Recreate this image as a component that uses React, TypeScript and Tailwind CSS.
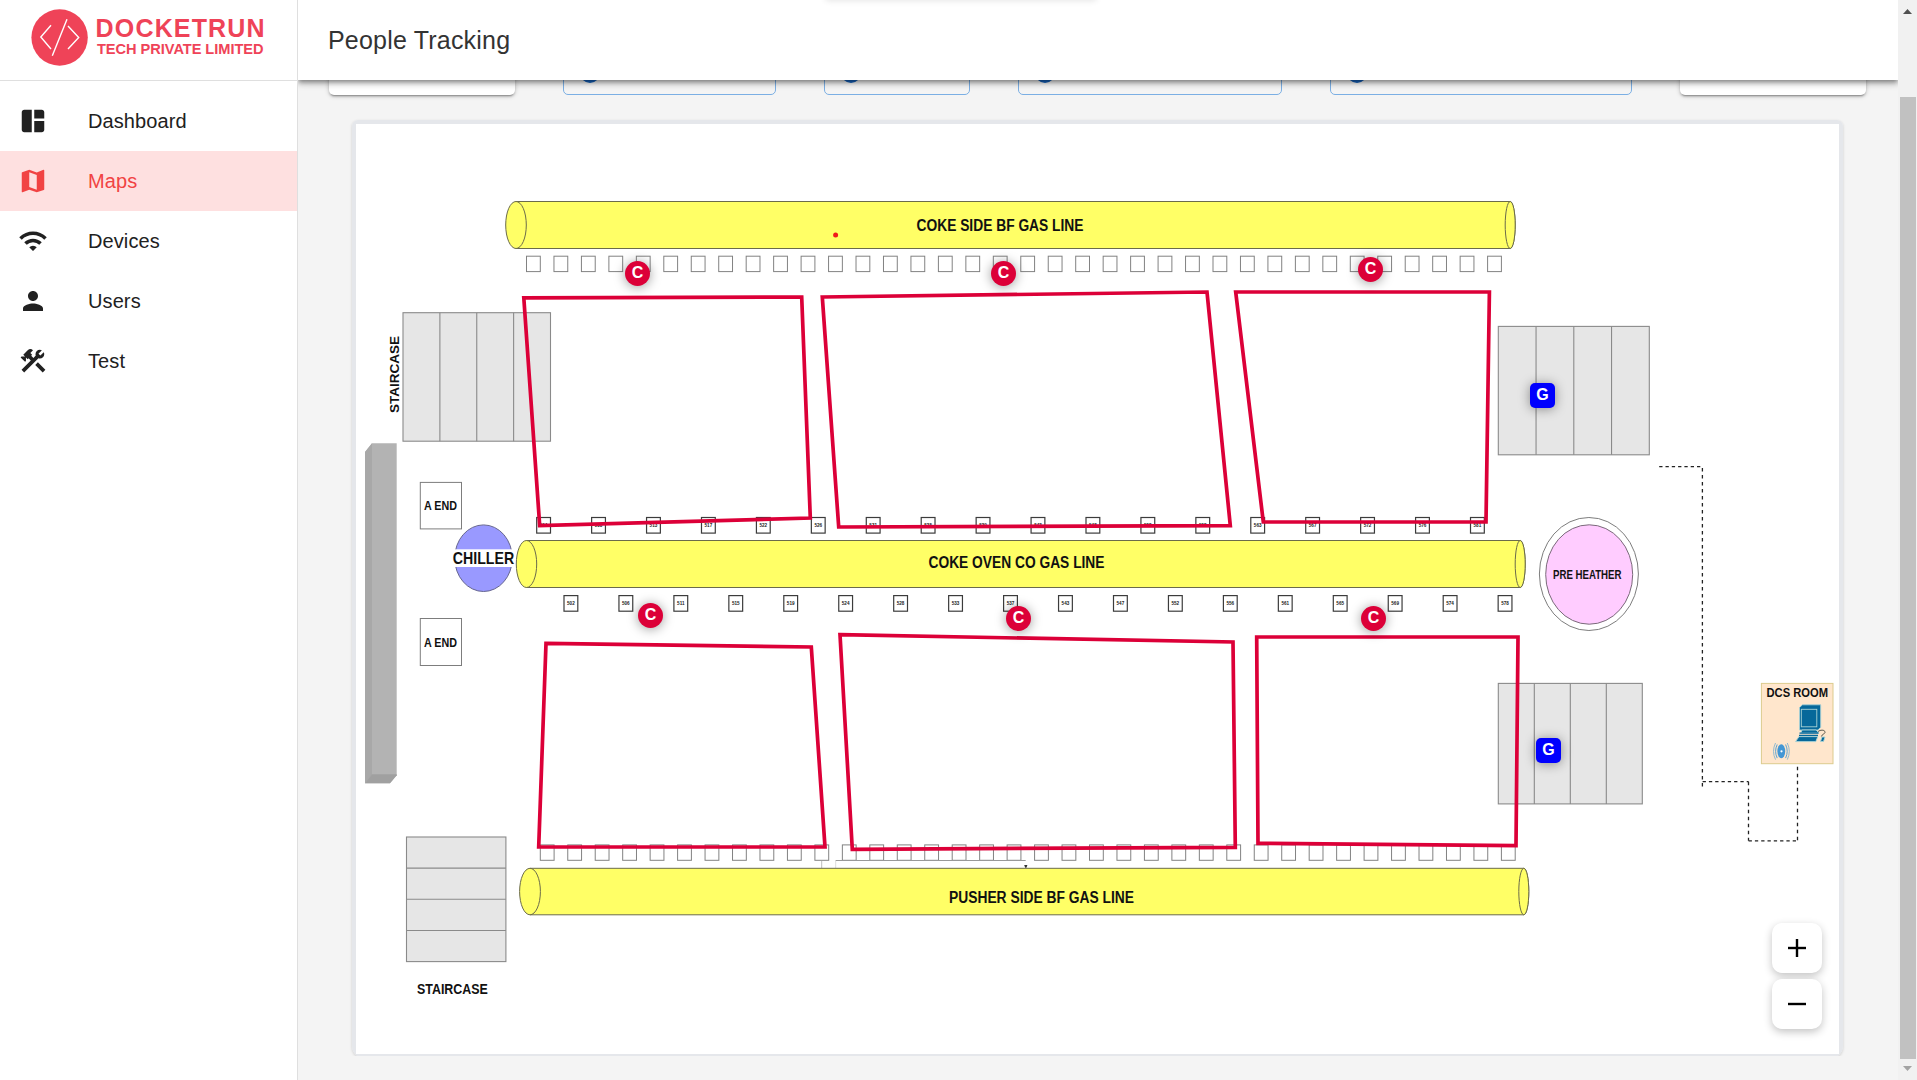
import React from "react";
import { MdSpaceDashboard, MdMap, MdWifi, MdPerson, MdConstruction } from "react-icons/md";

const NAV = [
  { label: "Dashboard", Icon: MdSpaceDashboard },
  { label: "Maps", Icon: MdMap, active: true },
  { label: "Devices", Icon: MdWifi },
  { label: "Users", Icon: MdPerson },
  { label: "Test", Icon: MdConstruction },
];

function Logo() {
  return (
    <svg width="240" height="66" viewBox="28 4 240 66" className="mt-1 ml-7" fill="none">
      <circle cx="59.6" cy="37.5" r="28.2" fill="#ef4358" />
      <g stroke="#fff" strokeWidth="1.4">
        <path d="M51 25.3 40.8 37 51 49" />
        <path d="M68 26 78.7 37.4 68 49" />
        <path d="M67 19.3 52.3 55.7" />
      </g>
      <g fill="#ef4358" className="font-['Liberation_Sans',sans-serif] font-bold">
        <text x="95.6" y="37.4" fontSize="25" textLength="169" lengthAdjust="spacing">DOCKETRUN</text>
        <text x="97" y="54" fontSize="14.6" textLength="166.5" lengthAdjust="spacing">TECH PRIVATE LIMITED</text>
      </g>
    </svg>
  );
}

function Sidebar() {
  return (
    <aside className="flex h-full w-[298px] shrink-0 flex-col border-r border-[#dfdfdf] bg-white">
      <div className="h-[81px] border-b border-[#dfdfdf]">
        <Logo />
      </div>
      <nav className="flex flex-col pt-2.5">
        {NAV.map(({ label, Icon, active }) => (
          <a
            key={label}
            className={
              active
                ? "flex h-[60px] items-center bg-[#fee0e0] pl-[18px] text-xl tracking-[0.1px] text-[#f14343]"
                : "flex h-[60px] items-center pl-[18px] text-xl tracking-[0.1px] text-[#212121]"
            }
          >
            <Icon size={30} className="mr-10 shrink-0" />
            <span>{label}</span>
          </a>
        ))}
      </nav>
    </aside>
  );
}

function Chip({ className }: { className: string }) {
  return (
    <div className={`h-10 rounded-[5px] border border-[#7bafe4] pt-[7px] pl-4 ${className}`}>
      <div className="size-5 rounded-full bg-[#1565c0]" />
    </div>
  );
}

function Toolbar() {
  const field =
    "h-10 w-[186px] rounded-[5px] bg-white shadow-[0_3px_1px_-2px_rgba(0,0,0,0.2),0_2px_2px_0_rgba(0,0,0,0.14),0_1px_5px_0_rgba(0,0,0,0.2)]";
  return (
    <div className="-mt-[25px] flex h-10 shrink-0 pl-[31px]">
      <div className={field} />
      <Chip className="ml-12 w-[213px]" />
      <Chip className="ml-12 w-[146px]" />
      <Chip className="ml-12 w-[264px]" />
      <Chip className="ml-12 w-[302px]" />
      <div className={`ml-12 ${field}`} />
    </div>
  );
}

/* ---------- Plant drawing ---------- */

const range = (n: number) => Array.from({ length: n }, (_, i) => i);

function Pipe({ x1, r1, x2, top, bottom }: { x1: number; r1: number; x2: number; top: number; bottom: number }) {
  const cy = (top + bottom) / 2;
  const ry = (bottom - top) / 2;
  return (
    <g fill="#ffff66" stroke="#6b6b4a" strokeWidth="1">
      <path d={`M${x1} ${top}H${x2}A5 ${ry} 0 0 1 ${x2} ${bottom}H${x1}Z`} />
      <ellipse cx={x1} cy={cy} rx={r1} ry={ry} />
      <ellipse cx={x2} cy={cy} rx={5} ry={ry} />
    </g>
  );
}

function Stairs({ x, y, w, h, horizontal }: { x: number; y: number; w: number; h: number; horizontal?: boolean }) {
  return (
    <g stroke="#8a8a8a" strokeWidth="1.1">
      <rect x={x} y={y} width={w} height={h} fill="#e6e6e6" />
      {[1, 2, 3].map((i) =>
        horizontal ? (
          <path key={i} d={`M${x} ${y + (h * i) / 4}h${w}`} />
        ) : (
          <path key={i} d={`M${x + (w * i) / 4} ${y}v${h}`} />
        ),
      )}
    </g>
  );
}

function Label({ x1, x2, y, size, children }: { x1: number; x2: number; y: number; size: number; children: string }) {
  return (
    <text x={x1} y={y} fontSize={size} textLength={x2 - x1} lengthAdjust="spacingAndGlyphs" fill="#111">
      {children}
    </text>
  );
}

const UPPER = ["504", "508", "513", "517", "522", "526", "531", "535", "539", "543", "548", "553", "558", "563", "567", "572", "576", "581"];
const LOWER = ["502", "506", "511", "515", "519", "524", "528", "533", "537", "543", "547", "552", "556", "561", "565", "569", "574", "578"];

function OvenRow({ x, y, pitch, names }: { x: number; y: number; pitch: number; names: string[] }) {
  return (
    <g>
      {names.map((n, i) => (
        <g key={n}>
          <rect x={x + i * pitch} y={y} width="13.8" height="15.6" fill="#fff" stroke="#3c3c3c" strokeWidth="1.2" />
          <text x={x + i * pitch + 6.9} y={y + 9.4} fontSize="4.6" textAnchor="middle" fill="#222" className="font-bold">
            {n}
          </text>
        </g>
      ))}
    </g>
  );
}

function BoxRow({ x, y }: { x: number; y: number }) {
  return (
    <g fill="none" stroke="#828282" strokeWidth="1">
      {range(36).map((i) => (
        <rect key={i} x={x + i * 27.46} y={y} width="13.8" height="15.4" />
      ))}
    </g>
  );
}

const ZONES = [
  "523.8,297.8 801.7,297 810.3,518 539.7,525.7",
  "822.3,297 1207,292 1230.3,525.7 838.7,527",
  "1235.7,292 1489.4,292 1486,522 1263.3,522",
  "546,643.3 811.3,647 825,847 538.7,847",
  "840,634.7 1233,642 1235.3,847.3 852.3,849.3",
  "1256.7,637 1518,637 1516,845.7 1258,843.3",
];

function Computer() {
  return (
    <g fill="#06689a" stroke="#a9d3d6" strokeWidth="0.9">
      <path d="M1799.5 707.5l3-2.7h18.2v22.5l-2.8 2.7h-18.4z" />
      <rect x="1801.3" y="709.3" width="15.5" height="17.5" />
      <path d="M1802 730h14l3 3h-18z" />
      <path d="M1799.5 733.2h19M1799 735.4h19" stroke="#06689a" strokeWidth="1.2" />
      <path d="M1799 736.6h18.8l-2 5h-20.2z" />
      <path d="M1818 731.5c3-2.3 7.5-1.5 7 1-.5 1.8-3 1.5-3.600 4" fill="none" stroke="#4a4a42" />
      <path d="M1822 737h3l-1.5 4.5h-3z" />
    </g>
  );
}

function PlantMap() {
  return (
    <svg
      width="1483"
      height="930"
      viewBox="356 124 1483 930"
      className="block bg-white font-['Liberation_Sans',sans-serif]"
    >
      <Pipe x1={516} r1={10.3} x2={1510.2} top={201.5} bottom={248.5} />
      <Pipe x1={526.5} r1={10.2} x2={1520.2} top={540.5} bottom={587.5} />
      <BoxRow x={526.5} y={256.2} />
      <BoxRow x={540.3} y={844.9} />
      <g fill="none">
        <path d="M835.7 868v-7.5" stroke="#ddd" />
        <path d="M821.7 861v7" stroke="#bdbdbd" />
        <path d="M835.7 860.5H1025.7" stroke="#999" />
      </g>
      <path d="M1024.2 865h3.2l-1 2.8h-1.2z" fill="#333" />
      <Pipe x1={530} r1={10.4} x2={1523.8} top={868.3} bottom={914.8} />

      <OvenRow x={536.7} y={517.5} pitch={54.93} names={UPPER} />
      <OvenRow x={564} y={595.6} pitch={54.95} names={LOWER} />

      <Stairs x={403} y={312.7} w={147.5} h={128.5} />
      <Stairs x={1498.3} y={326.4} w={151} h={128.4} />
      <Stairs x={1498.3} y={683.4} w={144} h={120.5} />
      <Stairs x={406.5} y={837} w={99.4} h={124.6} horizontal />

      <path d="M365 452l7-8.7h24.7v332l-6.7 8H365z" fill="#b3b3b3" />
      <path d="M365 452l7-8.7V774.5l-7 8.8z" fill="#a8a8a8" />
      <path d="M372 774.3h24.7v1l-6.7 8H365z" fill="#a0a0a0" />

      <g fill="#fff" stroke="#7d7d7d">
        <rect x="420.3" y="482.4" width="41.2" height="46.5" />
        <rect x="420.3" y="618.5" width="41.2" height="47" />
      </g>

      <ellipse cx="483.5" cy="558.2" rx="28.8" ry="33.3" fill="#9999ff" stroke="#66668f" />
      <rect x="452" y="549.3" width="63" height="17.7" fill="#fff" />

      <ellipse cx="1588.9" cy="574" rx="49.5" ry="56.5" fill="#fff" stroke="#7d7d7d" />
      <ellipse cx="1589.2" cy="574.5" rx="43.5" ry="49.7" fill="#ffccff" stroke="#7a6a7a" />

      <g fill="none" stroke="#222" strokeWidth="1.3">
        <path d="M1659.2 466.7h43.4" strokeDasharray="3.3 3" />
        <path d="M1702.4 468v318.7" strokeDasharray="3.5 3.5" />
        <path d="M1702.6 781.7h46" strokeDasharray="3.3 3" />
        <path d="M1748.5 781.7v59" strokeDasharray="3.5 3.5" />
        <path d="M1748.6 840.9h49.1" strokeDasharray="3.3 3" />
        <path d="M1797.5 766.7v74" strokeDasharray="3.5 3.5" />
      </g>

      <rect x="1761.4" y="683.4" width="71.6" height="80.3" fill="#ffe6cc" stroke="#dccb8e" />
      <Computer />
      <ellipse cx="1781.3" cy="751.3" rx="3.9" ry="7" fill="#4497d4" />
      <circle cx="1781.5" cy="751.3" r="1.1" fill="#fff" />
      <g fill="none" stroke="#5fa3d0" strokeWidth="1">
        <path d="M1777.2 744.5q-3.2 6.8 0 13.6M1785.6 744.5q3.2 6.8 0 13.6" />
        <path d="M1775.5 743q-4 8.3 0 16.6M1787.3 743q4 8.3 0 16.6" stroke="#8fb9cf" />
      </g>

      <g className="font-bold">
        <Label x1={916.5} x2={1083.5} y={231} size={16}>COKE SIDE BF GAS LINE</Label>
        <Label x1={928.5} x2={1104.5} y={568.2} size={16}>COKE OVEN CO GAS LINE</Label>
        <Label x1={949} x2={1134} y={903.2} size={16}>PUSHER SIDE BF GAS LINE</Label>
        <Label x1={424} x2={457} y={510} size={12.8}>A END</Label>
        <Label x1={424} x2={457} y={646.6} size={12.8}>A END</Label>
        <Label x1={452.8} x2={514.2} y={563.8} size={16.3}>CHILLER</Label>
        <Label x1={1553} x2={1621.5} y={578.8} size={12}>PRE HEATHER</Label>
        <Label x1={1766.5} x2={1828} y={697.4} size={13}>DCS ROOM</Label>
        <Label x1={417} x2={487.8} y={994.4} size={14}>STAIRCASE</Label>
        <g transform="translate(399 413) rotate(-90)">
          <Label x1={0} x2={77} y={0} size={12.5}>STAIRCASE</Label>
        </g>
      </g>

      <circle cx="835.6" cy="235" r="2.5" fill="#f01a1a" />
      <g fill="none" stroke="#dc0038" strokeWidth="3.7">
        {ZONES.map((p) => (
          <polygon key={p} points={p} />
        ))}
      </g>
    </svg>
  );
}

const PINS = [
  { kind: "C", x: 637.5, y: 273.5 },
  { kind: "C", x: 1003.5, y: 273.5 },
  { kind: "C", x: 1370.5, y: 269.5 },
  { kind: "C", x: 650.5, y: 615.5 },
  { kind: "C", x: 1018.5, y: 618.5 },
  { kind: "C", x: 1373.5, y: 618.5 },
  { kind: "G", x: 1542.5, y: 395.5 },
  { kind: "G", x: 1548.5, y: 750.5 },
];

function Pin({ kind, x, y }: { kind: string; x: number; y: number }) {
  const base =
    "absolute flex size-[25px] items-center justify-center pb-px text-base leading-none font-bold text-white shadow-[0_1px_12px_rgba(0,0,0,0.4)]";
  return (
    <div
      className={kind === "C" ? `${base} rounded-full bg-[#dc0038]` : `${base} rounded-[5px] bg-[#0000fe]`}
      style={{ left: x - 12.5 - 356, top: y - 12.5 - 124 }}
    >
      {kind}
    </div>
  );
}

function ZoomButton({ plus }: { plus?: boolean }) {
  return (
    <button className="flex size-[50px] items-center justify-center rounded-[10px] bg-white shadow-[0_3px_8px_rgba(0,0,0,0.24)]">
      <svg width="18" height="18" viewBox="0 0 18 18" stroke="#000" strokeWidth="2.4">
        <path d="M0 9h18" />
        {plus && <path d="M9 0v18" />}
      </svg>
    </button>
  );
}

function MapCard() {
  return (
    <div className="mt-[15px] h-[946px] overflow-hidden px-[44px] pt-[10px]">
      <div className="ml-2.5 h-[938px] w-[1491px] rounded-t-[6px] rounded-b-[12px] border-4 border-[#e5e7eb] shadow-[0_1px_3px_rgba(0,0,0,0.16)]">
        <div className="relative">
          <PlantMap />
          {PINS.map((p) => (
            <Pin key={`${p.x}-${p.y}`} {...p} />
          ))}
          <div className="absolute right-[17px] bottom-[25px] flex flex-col gap-1.5">
            <ZoomButton plus />
            <ZoomButton />
          </div>
        </div>
      </div>
    </div>
  );
}

function Scrollbar() {
  return (
    <div className="flex h-full w-[19px] shrink-0 flex-col items-center bg-[#f1f1f1]">
      <svg width="9" height="5" viewBox="0 0 9 5" className="mt-[9px]" fill="#505050">
        <path d="M4.5 0 9 5H0z" />
      </svg>
      <div className="mt-[83px] h-[962px] w-4 bg-[#c1c1c1]" />
      <svg width="9" height="5" viewBox="0 0 9 5" className="mt-[7px]" fill="#a3a3a3">
        <path d="M0 0h9L4.5 5z" />
      </svg>
    </div>
  );
}

export default function App() {
  return (
    <div className="flex h-[1080px] w-[1917px] overflow-hidden bg-[#f4f4f4] font-['Liberation_Sans',Arial,sans-serif]">
      <Sidebar />
      <main className="flex h-full min-w-0 flex-1 flex-col overflow-hidden">
        <header className="relative z-10 flex h-20 shrink-0 items-center bg-white pt-0.5 pl-[30px] shadow-[0_2px_4px_-1px_rgba(0,0,0,0.3),0_4px_5px_0_rgba(0,0,0,0.2),0_1px_10px_0_rgba(0,0,0,0.18)]">
          <h1 className="text-[25px] tracking-[0.2px] text-[#333]">People Tracking</h1>
          <div className="absolute -top-5 left-[527px] h-5 w-[272px] rounded shadow-[0_1px_6px_rgba(0,0,0,0.1)]" />
        </header>
        <Toolbar />
        <MapCard />
      </main>
      <Scrollbar />
    </div>
  );
}
